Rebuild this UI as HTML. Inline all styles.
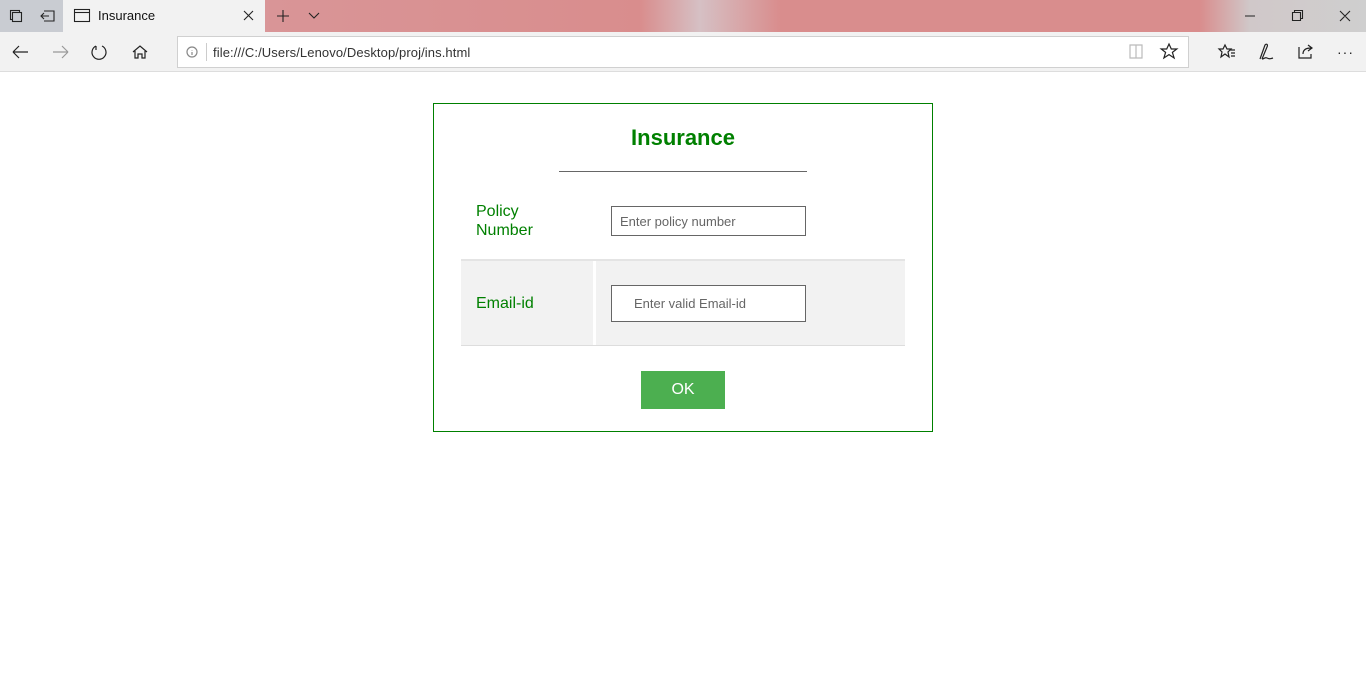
<!DOCTYPE html>
<html><head><style>
*{margin:0;padding:0;box-sizing:border-box}
body{width:1366px;height:688px;background:#fff;font-family:"Liberation Sans",Arial,sans-serif;position:relative;overflow:hidden}
.a{position:absolute}
svg{position:absolute}
</style></head><body>
<div class="a" style="left:0;top:0;width:1366px;height:32px;background:linear-gradient(90deg,#c9ccd2 0,#c9ccd2 63px,#d99597 270px,#d98d8d 640px,#d6c0c4 700px,#d98d8d 780px,#d98d8d 1200px,#d0c8c9 1250px,#cfcfcf 1366px)"></div>
<div class="a" style="left:63px;top:0;width:202px;height:32px;background:#f2f2f2"></div>
<div class="a" style="left:98px;top:8px;font-size:13px;color:#111">Insurance</div>
<svg style="left:0;top:0" width="1366" height="72" fill="none" stroke="#222" stroke-width="1.1">
<rect x="10.5" y="10.5" width="9" height="9"/><rect x="12.5" y="12.5" width="9" height="9" fill="#c9ccd2"/>
<path d="M44 11h10v10H44M41 16h8M44 13l-3 3 3 3"/>
<rect x="74.5" y="9.5" width="15" height="12"/><path d="M74.5 12.5h15"/>
<path d="M244 11l9 9M253 11l-9 9M283 10v12M277 16h12M309 13l5 5 5-5"/>
<path d="M1245 16h10M1292.5 12.5h8v8h-8zM1294.5 12.5v-2h8v8h-2M1340 11l10 10M1350 11l-10 10"/>
</svg>
<div class="a" style="left:0;top:32px;width:1366px;height:40px;background:#f2f2f2;border-bottom:1px solid #ddd"></div>
<div class="a" style="left:177px;top:36px;width:1012px;height:32px;background:#fff;border:1px solid #d0d0d0"></div>
<div class="a" style="left:206px;top:43px;width:1px;height:18px;background:#ccc"></div>
<div class="a" style="left:213px;top:45px;font-size:13px;color:#333;letter-spacing:0.1px">file:///C:/Users/Lenovo/Desktop/proj/ins.html</div>
<svg style="left:0;top:0" width="1366" height="72" fill="none" stroke="#222" stroke-width="1.2">
<path d="M13 52h15M13 52l6-6M13 52l6 6" />
<path d="M53 52h15M68 52l-6-6M68 52l-6 6" stroke="#999"/>
<path d="M96 46a7 7 0 1 0 6 0M96 46v4" />
<path d="M133 52l7-6 7 6M135 51v7h3v-4h4v4h3v-7"/>
<circle cx="192" cy="52" r="5" stroke="#888"/><path d="M192 50v0.5M192 52v3" stroke="#888"/>
<path d="M1130 45h6v13h-6zM1136 45h6v13h-6z" stroke="#bbb"/>
<path d="M1169 44l2.3 5h5.5l-4.4 3.4 1.7 5.6-5.1-3.4-5.1 3.4 1.7-5.6-4.4-3.4h5.5z"/>
<path d="M1225 45l2 4h4l-3 3 1 5-4-3-4 3 1-5-3-3h4zM1230 50h5M1231 53h4M1231 56h4"/>
<path d="M1260 59l5-14c2-2 3 0 2 2l-5 12M1262 59c2 0 3-2 5-1s3 1 6 0"/>
<path d="M1299 47v11h12v-4M1303 54c0-4 3-6 8-6M1308 45l4 3-4 3"/>
</svg>
<div class="a" style="left:1337px;top:44px;font-size:14px;color:#222;letter-spacing:1px">···</div>

<div class="a" style="left:433px;top:103px;width:500px;height:329px;border:1px solid #008000"></div>
<div class="a" style="left:433px;top:125px;width:500px;text-align:center;font-size:22px;font-weight:bold;color:#008000">Insurance</div>
<div class="a" style="left:559px;top:171px;width:248px;height:1px;background:#666"></div>
<div class="a" style="left:476px;top:202px;font-size:16px;line-height:19px;color:#008000">Policy<br>Number</div>
<div class="a" style="left:611px;top:206px;width:195px;height:30px;border:1px solid #666;font-size:13px;color:#666;padding:7px 0 0 8px">Enter policy number</div>
<div class="a" style="left:461px;top:259px;width:444px;height:2px;background:#e4e4e4"></div>
<div class="a" style="left:461px;top:261px;width:132px;height:84px;background:#f2f2f2"></div>
<div class="a" style="left:596px;top:261px;width:309px;height:84px;background:#f2f2f2"></div>
<div class="a" style="left:461px;top:345px;width:444px;height:1px;background:#ddd"></div>
<div class="a" style="left:476px;top:295px;font-size:16px;color:#008000">Email-id</div>
<div class="a" style="left:611px;top:285px;width:195px;height:37px;border:1px solid #666;background:#fff;font-size:13px;color:#666;padding:10px 0 0 22px">Enter valid Email-id</div>
<div class="a" style="left:641px;top:371px;width:84px;height:38px;background:#4caf50;color:#fff;font-size:16px;text-align:center;line-height:38px">OK</div>
</body></html>
